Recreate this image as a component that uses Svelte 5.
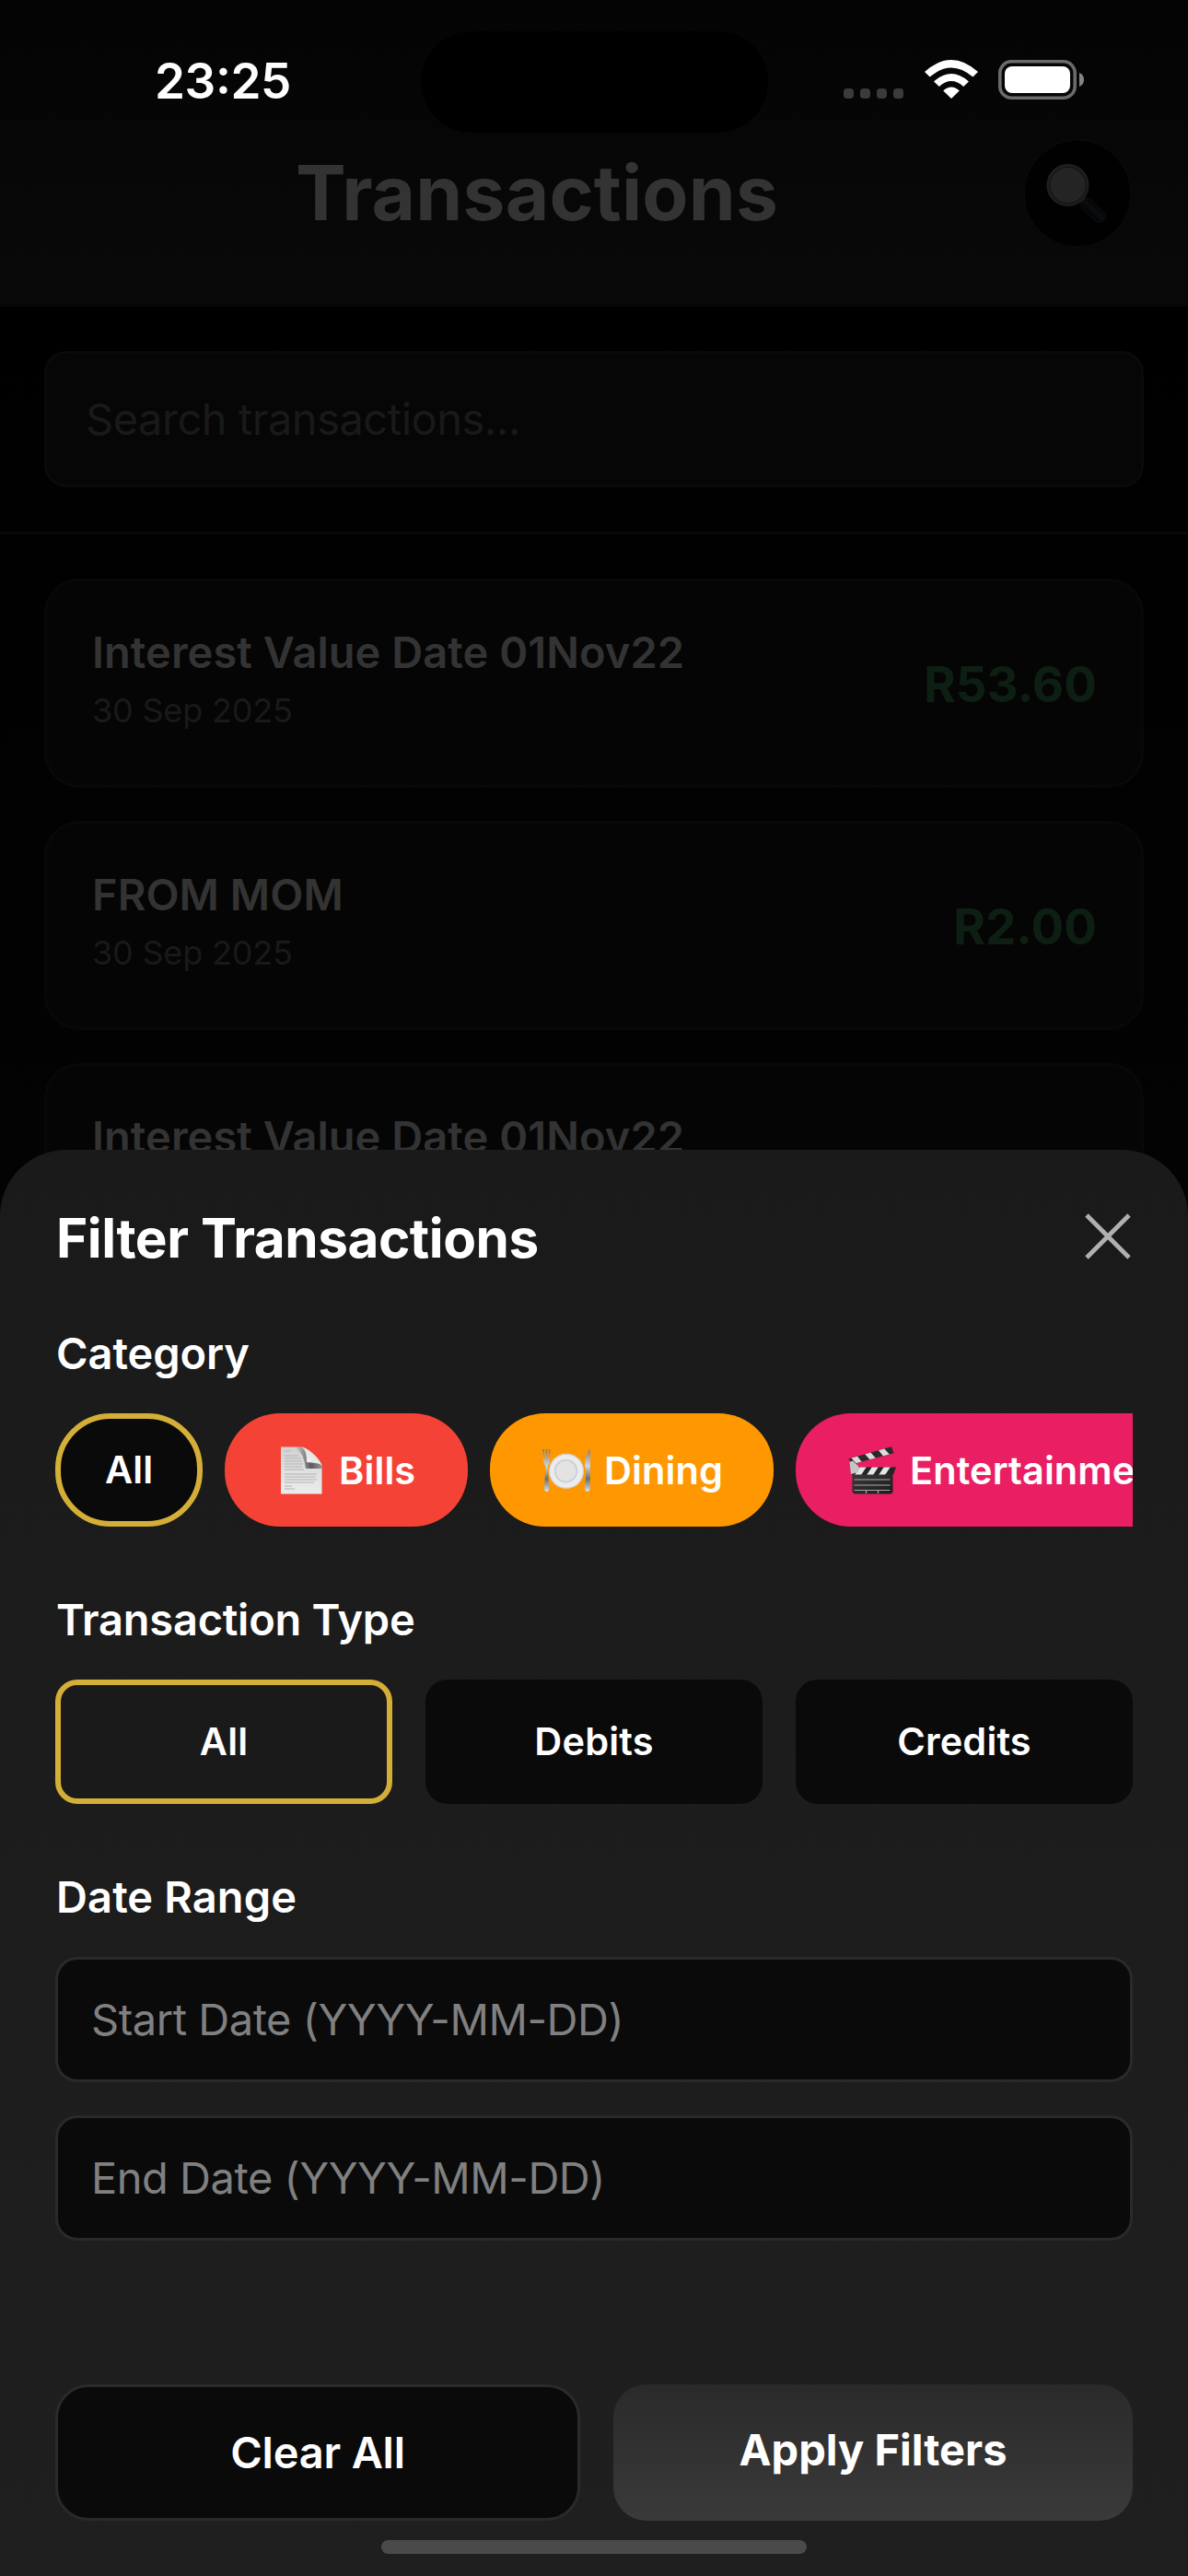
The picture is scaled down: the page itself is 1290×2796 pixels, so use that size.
<script>
  const transactions = [
    { id: 1, title: 'Interest Value Date 01Nov22', date: '30 Sep 2025', amount: 'R53.60' },
    { id: 2, title: 'FROM MOM', date: '30 Sep 2025', amount: 'R2.00' },
    { id: 3, title: 'Interest Value Date 01Nov22', date: '30 Sep 2025', amount: 'R53.60' }
  ];
  const types = ['All', 'Debits', 'Credits'];
  let selectedType = $state('All');
</script>

<div class="screen">
  <header class="top">
    <div class="status">
      <div class="clock">23:25</div>
      <div class="island"></div>
      <div class="indicators">
        <div class="dots"><i></i><i></i><i></i><i></i></div>
        <svg class="wifi" width="58" height="42" viewBox="0 0 58 42">
          <path d="M0 13 Q29 -13 58 13 L52.4 18.6 Q29 -1.6 5.6 18.6 Z" fill="#fff" />
          <path d="M10 23.4 Q29 6.4 48 23.4 L42.2 29 Q29 17.2 15.8 29 Z" fill="#fff" />
          <path d="M20.2 33.4 Q29 25.4 37.8 33.4 L29 42 Z" fill="#fff" />
        </svg>
        <svg class="battery" width="94" height="43" viewBox="0 0 94 43">
          <rect x="1.8" y="1.8" width="81.4" height="39.4" rx="12.5" fill="none" stroke="#6b6b6b" stroke-width="3.6" />
          <rect x="7" y="7" width="71" height="29" rx="8" fill="#fff" />
          <path d="M88 14 Q93 16 93 21.5 Q93 27 88 29 Z" fill="#858585" />
        </svg>
      </div>
    </div>
    <div class="title-row">
      <h1>Transactions</h1>
      <button class="search-btn" aria-label="Search">
        <svg width="114" height="114" viewBox="0 0 114 114">
          <defs>
            <linearGradient id="rim" x1="0" y1="0" x2="1" y2="1">
              <stop offset="0" stop-color="#1d2329" />
              <stop offset="1" stop-color="#1c1c1c" />
            </linearGradient>
            <linearGradient id="grip" x1="0" y1="1" x2="0" y2="0">
              <stop offset="0" stop-color="#020203" />
              <stop offset=".6" stop-color="#0b0d0f" />
              <stop offset="1" stop-color="#030303" />
            </linearGradient>
          </defs>
          <path d="M60 64 L61 70 L68 62 L63 61 Z" fill="#151515" />
          <rect x="63" y="59.500" width="30" height="13" rx="5" fill="url(#grip)" stroke="#0d0e0f" stroke-width="1.2" transform="rotate(43 64 66)" />
          <circle cx="46.5" cy="48" r="21.8" fill="#1f1f1f" stroke="url(#rim)" stroke-width="2.400" />
          <circle cx="46.5" cy="48" r="19.8" fill="#242424" stroke="#151515" stroke-width="1.4" />
        </svg>
      </button>
    </div>
  </header>

  <div class="search-area">
    <div class="search-field">Search transactions...</div>
  </div>

  <main class="list">
    {#each transactions as t (t.id)}
      <article class="card">
        <div class="info">
          <div class="name">{t.title}</div>
          <div class="date">{t.date}</div>
        </div>
        <div class="amount">{t.amount}</div>
      </article>
    {/each}
  </main>

  <section class="sheet">
    <div class="sheet-head">
      <h2>Filter Transactions</h2>
      <button class="close" aria-label="Close">
        <svg width="50" height="50" viewBox="0 0 50 50">
          <path d="M2 2 L48 48 M48 2 L2 48" stroke="#b0b0b0" stroke-width="4.8" fill="none" />
        </svg>
      </button>
    </div>

    <h3 class="first">Category</h3>
    <div class="chips">
      <button class="chip all">All</button>
      <button class="chip bills">
        <svg width="54" height="54" viewBox="0 0 54 54">
          <defs>
            <linearGradient id="paper" x1="0" y1="0" x2="0" y2="1">
              <stop offset="0" stop-color="#d2d2d2" />
              <stop offset="1" stop-color="#ececec" />
            </linearGradient>
            <linearGradient id="shade" x1="0" y1="0" x2="1" y2="0">
              <stop offset="0" stop-color="#444" stop-opacity="0" />
              <stop offset=".6" stop-color="#444" />
              <stop offset="1" stop-color="#888" />
            </linearGradient>
            <linearGradient id="fold" x1="0" y1="1" x2="1" y2="0">
              <stop offset="0" stop-color="#fff" />
              <stop offset="1" stop-color="#cfcfcf" />
            </linearGradient>
          </defs>
          <path d="M5 1.500 H26 Q34 3 40 9 Q48 16 49.500 22 V52.500 H5 Z" fill="url(#paper)" />
          <path d="M20 1.500 H27 Q33 4 33 18 L49.500 20 V25 H32 Q30 8 20 1.500 Z" fill="url(#shade)" opacity=".85" />
          <path d="M27 1.500 Q35 5 33 18 Q43 16 49.500 22 Q47 15 40 9 Q32 1.500 27 1.500 Z" fill="url(#fold)" />
          <path d="M9 6 H16 M9 11 H24 M9 14 H27 M9 17 H28 M9 20 H29 M9 23 H28 M9 26 H30 M9 31 H44 M9 34 H43 M9 37 H44 M9 40 H41 M9 44 H17 M9 47 H20" stroke="#b4b4b4" stroke-width="1.1" />
        </svg>
        <span>Bills</span>
      </button>
      <button class="chip dining">
        <svg width="54" height="54" viewBox="0 0 54 54">
          <defs>
            <linearGradient id="steel" x1="0" y1="0" x2="0" y2="1">
              <stop offset="0" stop-color="#8b7a60" />
              <stop offset=".4" stop-color="#c9d8e6" />
              <stop offset=".7" stop-color="#6e6d68" />
              <stop offset="1" stop-color="#d5e4f2" />
            </linearGradient>
          </defs>
          <path d="M1 4 L2 17 Q2.500 20 4.500 22 L3 46 Q3 50 5.500 50 Q8.500 50 8.200 46 L6.800 22 Q9 20 9.200 17 L9.500 4 H8 L7.600 15 H6.800 L6.500 4 H4.600 L4.400 15 H3.400 L2.700 4 Z" fill="url(#steel)" />
          <path d="M53 3.500 Q47 9 47 22 L48.500 27 L47 46 Q47 50 50 50 Q52.500 50 52.700 46 Z" fill="url(#steel)" />
          <circle cx="27" cy="27.800" r="19" fill="#ececed" />
          <circle cx="27" cy="27.800" r="18.400" fill="none" stroke="#c9cacc" stroke-width="1" />
          <circle cx="26.500" cy="27.600" r="12.800" fill="#cbd2d8" />
          <circle cx="26.500" cy="27.600" r="10.800" fill="#e3e3e3" />
        </svg>
        <span>Dining</span>
      </button>
      <button class="chip fun">
        <svg width="54" height="54" viewBox="0 0 54 54">
          <defs>
            <clipPath id="arm"><path d="M1.300 14.500 L48 1.300 L50.500 8.300 L6 20 Z" /></clipPath>
            <clipPath id="bar"><path d="M5 23.500 H53 L50 31.500 H5 Z" /></clipPath>
            <linearGradient id="slate" x1="0" y1="0" x2="1" y2="1">
              <stop offset="0" stop-color="#3a3a3a" />
              <stop offset="1" stop-color="#1b1b1b" />
            </linearGradient>
          </defs>
          <path d="M5.500 30 H49.500 V49 Q49.500 52.500 46 52.500 H9 Q5.500 52.500 5.500 49 Z" fill="url(#slate)" />
          <path d="M7.500 37 H46.500 M7.500 43 H46.500 M7.500 48.500 H46.500 M20.500 48.500 V52 M33.500 48.500 V52" stroke="#a9a9a9" stroke-width="1.200" />
          <g clip-path="url(#bar)">
            <rect x="2" y="23" width="52" height="9" fill="#252525" />
            <path d="M8 32 L14 23 H21 L15 32 Z M21 32 L27 23 H34 L28 32 Z M34 32 L40 23 H47 L41 32 Z" fill="#e6e6e6" />
          </g>
          <g clip-path="url(#arm)">
            <rect x="0" y="0" width="54" height="22" fill="#2a2a2a" />
            <path d="M3 12 L12 22 H19 L9 9 Z M18 8 L27 18 L33 16 L24 6 Z M33 4 L41 14 L48 12 L39 2 Z" fill="#dcdcdc" />
          </g>
          <path d="M2.500 18 L6 16.500 L13 23.500 L12 29 L4 31 Z" fill="#c3c6c8" />
        </svg>
        <span>Entertainment</span>
      </button>
    </div>

    <h3>Transaction Type</h3>
    <div class="types">
      {#each types as type (type)}
        <button class="type" class:selected={type === selectedType} onclick={() => (selectedType = type)}>{type}</button>
      {/each}
    </div>

    <h3 class="range">Date Range</h3>
    <div class="fields">
      <div class="field">Start Date (YYYY-MM-DD)</div>
      <div class="field">End Date (YYYY-MM-DD)</div>
    </div>

    <div class="actions">
      <button class="clear">Clear All</button>
      <button class="apply">Apply Filters</button>
    </div>
    <div class="home"></div>
  </section>
</div>

<style>
  :global(body) { background: #000; }
  .screen {
    position: relative;
    width: 1290px;
    height: 2796px;
    overflow: hidden;
    background: linear-gradient(#000 333px, #030303 1300px);
    font-family: Inter, "Liberation Sans", sans-serif;
    color: #fff;
  }
  .screen * { box-sizing: border-box; }
  h1, h2, h3 { margin: 0; }
  button {
    font-family: inherit;
    color: inherit;
    border: 0;
    padding: 0;
    background: none;
    display: flex;
    align-items: center;
    justify-content: center;
  }
  svg { display: block; flex: none; }

  .top { height: 333px; background: linear-gradient(#040404, #090909); border-bottom: 3px solid #070707; }
  .status {
    height: 150px;
    padding-top: 34px;
    display: grid;
    grid-template-columns: 457px 377px 1fr;
    align-items: start;
  }
  .clock {
    padding-left: 168px;
    line-height: 108px;
    font-size: 53px;
    font-weight: 600;
    letter-spacing: -0.4px;
    font-feature-settings: "case";
  }
  .island { height: 110px; border-radius: 55px; background: #000; }
  .indicators { display: flex; align-items: flex-start; padding: 31px 0 0 82px; }
  .dots { display: flex; gap: 7px; padding-top: 31px; margin-right: 23px; }
  .dots i { width: 11px; height: 11px; border-radius: 4px; background: #3b3b3b; }
  .wifi { margin-right: 22px; }

  .title-row { display: flex; align-items: center; gap: 4px; height: 120px; padding: 0 60px; }
  h1 { flex: 1; text-align: center; font-size: 82px; line-height: 100px; font-weight: 700; letter-spacing: 0.15px; color: #333; }
  .search-btn { width: 120px; height: 120px; border-radius: 50%; border: 3px solid #080808; background: #010101; }

  .search-area { padding: 48px; height: 247px; border-bottom: 3px solid #070707; }
  .search-field {
    height: 148px;
    border: 3px solid #0a0a0a;
    border-radius: 24px;
    background: #060606;
    padding-left: 42px;
    font-size: 47px;
    line-height: 141px;
    letter-spacing: -0.48px;
    color: #191919;
  }

  .list { display: flex; flex-direction: column; gap: 36px; padding: 48px; }
  .card {
    height: 227px;
    flex: none;
    display: flex;
    justify-content: space-between;
    border: 3px solid #080808;
    border-radius: 38px;
    background: #050505;
    padding: 48px 48px 0 49px;
  }
  .name { font-size: 47px; line-height: 58px; font-weight: 600; letter-spacing: 0.05px; color: #333; }
  .date { margin-top: 12px; font-size: 36px; line-height: 44px; letter-spacing: -0.2px; color: #191919; }
  .amount { padding-top: 32px; font-size: 53px; line-height: 64px; font-weight: 700; color: #0d1f13; }

  .sheet {
    position: absolute;
    left: 0;
    right: 0;
    bottom: 0;
    height: 1548px;
    padding: 60px;
    display: flex;
    flex-direction: column;
    border-radius: 72px 72px 0 0;
    background: linear-gradient(#1a1a1a, #1f1f1f);
  }
  .sheet-head { display: flex; justify-content: space-between; align-items: center; height: 72px; padding-right: 2px; }
  h2 { font-size: 58.500px; line-height: 74px; font-weight: 700; letter-spacing: -0.48px; padding-left: 1px; }
  .close { margin-bottom: 4px; }
  h3 { margin-top: 72px; padding-left: 1px; font-size: 47px; line-height: 58px; font-weight: 600; letter-spacing: -0.25px; }
  h3.first { margin-top: 60px; letter-spacing: -0.1px; }
  h3.range { letter-spacing: 0.1px; }

  .chips { display: flex; gap: 24px; margin-top: 36px; overflow: hidden; }
  .chip {
    flex: none;
    height: 123px;
    border-radius: 60px;
    font-size: 41.500px;
    line-height: 50px;
    font-weight: 600;
    letter-spacing: 0.1px;
    justify-content: flex-start;
    padding-left: 56px;
  }
  .chip span { margin-left: 14px; }
  .chip.all { width: 160px; padding: 0 0 2px; justify-content: center; border: 6px solid #d4af37; background: #0a0a0a; }
  .bills { width: 264px; background: #f44336; }
  .dining { width: 308px; background: #ff9800; }
  .fun { width: 460px; background: #e91e63; }

  .types { display: grid; grid-template-columns: repeat(3, 1fr); gap: 36px; margin-top: 36px; }
  .type { height: 135px; padding-bottom: 2px; border-radius: 24px; background: #0a0a0a; font-size: 41.500px; font-weight: 600; letter-spacing: 0.15px; }
  .type.selected { border: 6px solid #d4af37; background: #1a1a1a; }

  .fields { display: flex; flex-direction: column; gap: 36px; margin-top: 36px; }
  .field {
    height: 136px;
    border: 3px solid #2a2a2a;
    border-radius: 24px;
    background: #0a0a0a;
    padding-left: 36px;
    font-size: 47px;
    line-height: 130px;
    letter-spacing: -0.48px;
    color: #808080;
  }

  .actions { display: flex; gap: 36px; margin-top: auto; }
  .actions button { height: 148px; border-radius: 36px; font-size: 47px; }
  .clear { width: 570px; padding-bottom: 2px; border: 3px solid #2a2a2a; background: #0a0a0a; font-weight: 600; letter-spacing: -0.2px; }
  .apply { width: 564px; padding-bottom: 7px; background: linear-gradient(#2a2a2a, #3a3a3a); font-weight: 700; }
  .home {
    position: absolute;
    left: 414px;
    bottom: 24px;
    width: 462px;
    height: 15px;
    border-radius: 8px;
    background: #4a4a4a;
  }
</style>
